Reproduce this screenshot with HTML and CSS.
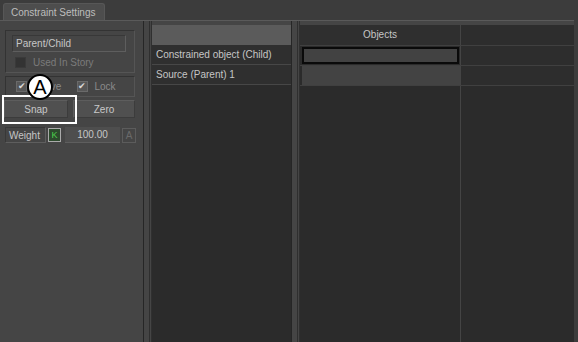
FILE: index.html
```html
<!DOCTYPE html>
<html lang="en">
<head>
    <meta charset="UTF-8">
    <title>Constraint Settings</title>
    <link rel="stylesheet" href="styles.css">
</head>
<body>
    <div class="tabbar">
        <div class="tab">Constraint Settings</div>
    </div>

    <div class="main">
        <!-- left settings column -->
        <div class="left">
            <div class="group group-type">
                <div class="field">Parent/Child</div>
                <div class="check-row disabled">
                    <span class="box"></span>
                    <span>Used In Story</span>
                </div>
            </div>

            <div class="group group-flags">
                <div class="check-row">
                    <span class="box checked">&#10004;</span>
                    <span>Active</span>
                </div>
                <div class="check-row lock">
                    <span class="box checked">&#10004;</span>
                    <span>Lock</span>
                </div>
            </div>

            <div class="buttons">
                <button class="btn btn-snap">Snap</button>
                <button class="btn btn-zero">Zero</button>
                <span class="highlight"></span>
            </div>

            <div class="weight-row">
                <span class="weight-label">Weight</span>
                <span class="key">K</span>
                <span class="weight-value">100.00</span>
                <span class="anim">A</span>
            </div>

            <span class="callout">A</span>
        </div>

        <div class="splitter"></div>

        <!-- constraint slots -->
        <div class="slots">
            <div class="slot-head"></div>
            <div class="slot-row">Constrained object (Child)</div>
            <div class="slot-row">Source (Parent) 1</div>
        </div>

        <div class="splitter"></div>

        <!-- objects grid -->
        <div class="objects">
            <div class="obj-row obj-head">
                <div class="cell">Objects</div>
                <div class="cell cell-side"></div>
            </div>
            <div class="obj-row">
                <div class="cell"><div class="slot-box"></div></div>
                <div class="cell cell-side"></div>
            </div>
            <div class="obj-row">
                <div class="cell cell-light"></div>
                <div class="cell cell-side"></div>
            </div>
            <div class="obj-fill">
                <div class="cell"></div>
                <div class="cell cell-side"></div>
            </div>
        </div>
    </div>
</body>
</html>
```

FILE: styles.css
```css
/* Constraint Settings panel */
body {
    margin: 0;
    width: 578px;
    height: 342px;
    overflow: hidden;
    background-color: #3c3c3c;
    font-family: 'Liberation Sans', Arial, sans-serif;
    font-size: 10px;
    color: #c6c6c6;
}

.tabbar {
    height: 20px;
    padding: 3px 0 0 3px;
    box-sizing: border-box;
}

.tab {
    width: 102px;
    height: 17px;
    line-height: 17px;
    padding-left: 7px;
    box-sizing: border-box;
    background-color: #4d4d4d;
    border: 1px solid #575757;
    border-bottom: none;
    border-radius: 3px 3px 0 0;
    color: #bdbdbd;
}

.main {
    display: flex;
    height: 322px;
    width: 574px;
    border-top: 1px solid #5a5a5a;
    background-color: #454545;
}

.main > div {
    flex-shrink: 0;
}

/* left column */
.left {
    position: relative;
    width: 143px;
    padding: 9px 0 0 5px;
    box-sizing: border-box;
    display: flex;
    flex-direction: column;
}

.group {
    width: 130px;
    box-sizing: border-box;
    border: 1px solid #333;
    border-right-color: #555;
    border-bottom-color: #555;
}

.group-type {
    height: 43px;
    padding: 4px 0 0 6px;
}

.field {
    width: 114px;
    height: 17px;
    line-height: 16px;
    box-sizing: border-box;
    padding-left: 3px;
    border: 1px solid #5e5e5e;
    border-top-color: #383838;
    border-left-color: #383838;
    background-color: #464646;
}

.check-row {
    display: flex;
    align-items: center;
    gap: 7px;
    height: 12px;
    margin-top: 4px;
    padding-left: 3px;
}

.check-row.disabled {
    color: #7b7b7b;
}

.box {
    width: 11px;
    height: 11px;
    background-color: #333;
    border: 1px solid #3a3a3a;
    box-sizing: border-box;
    display: flex;
    align-items: center;
    justify-content: center;
    font-size: 9px;
    color: #d8d8d8;
}

.box.checked {
    background-color: #575757;
    border-color: #6a6a6a;
}

.group-flags {
    margin-top: 3px;
    height: 21px;
    display: flex;
    padding: 2px 0 0 7px;
    color: #8a8a8a;
}

.group-flags .check-row {
    margin-top: 0;
    padding-left: 3px;
    height: 14px;
    width: 60px;
}

.buttons {
    position: relative;
    display: flex;
    gap: 5px;
    margin: 3px 0 0 -1px;
}

.btn {
    height: 18px;
    padding: 0;
    font-family: inherit;
    font-size: 10px;
    color: #c8c8c8;
    background-color: #505050;
    border: 1px solid #5d5d5d;
    border-bottom-color: #3c3c3c;
    border-right-color: #3c3c3c;
}

.btn-snap {
    width: 64px;
}

.btn-zero {
    width: 62px;
}

.highlight {
    position: absolute;
    left: -2px;
    top: -5px;
    width: 75px;
    height: 29px;
    box-sizing: border-box;
    border: 2px solid #fff;
}

.weight-row {
    display: flex;
    align-items: center;
    height: 16px;
    margin-top: 9px;
}

.weight-label {
    width: 41px;
    height: 16px;
    line-height: 15px;
    box-sizing: border-box;
    padding-left: 3px;
    border: 1px solid #5e5e5e;
    border-top-color: #383838;
    border-left-color: #383838;
}

.key {
    width: 11px;
    height: 12px;
    margin-left: 2px;
    line-height: 12px;
    text-align: center;
    font-size: 9px;
    color: #4cd14c;
    background-color: #2d4a2d;
    border: 1px solid #aaa;
}

.weight-value {
    width: 55px;
    height: 16px;
    margin-left: 4px;
    line-height: 16px;
    text-align: center;
    background-color: #4e4e4e;
    border-bottom: 1px solid #5e5e5e;
    box-sizing: border-box;
}

.anim {
    width: 14px;
    height: 15px;
    margin-left: 2px;
    line-height: 13px;
    text-align: center;
    box-sizing: border-box;
    color: #6a6a6a;
    border: 1px solid #5c5c5c;
}

.callout {
    position: absolute;
    left: 27px;
    top: 53px;
    width: 26px;
    height: 26px;
    box-sizing: border-box;
    border: 2px solid #000;
    border-radius: 50%;
    background-color: #fff;
    color: #000;
    font-size: 20px;
    line-height: 22px;
    text-align: center;
}

/* splitters between panes */
.splitter {
    width: 9px;
    border-left: 1px solid #262626;
    border-right: 1px solid #303030;
    box-sizing: border-box;
    background-color: #454545;
    position: relative;
}

.splitter::after {
    content: '';
    position: absolute;
    right: 1px;
    top: 0;
    bottom: 0;
    width: 1px;
    background-color: #2f2f2f;
}

/* slot list */
.slots {
    width: 139px;
    padding-top: 4px;
    background-color: #2b2b2b;
    box-shadow: inset 0 4px 0 #454545;
}

.slot-head {
    height: 20px;
    background-color: #5b5b5b;
}

.slot-row {
    height: 19px;
    line-height: 20px;
    padding-left: 4px;
    white-space: nowrap;
    background-color: #2f2f2f;
    border-bottom: 1px solid #474747;
}

/* objects grid */
.objects {
    width: 274px;
    display: flex;
    flex-direction: column;
    padding-top: 4px;
    background-color: #2b2b2b;
    box-shadow: inset 0 4px 0 #454545;
}

.obj-row {
    display: flex;
    height: 19px;
    border-bottom: 1px solid #404040;
}

.obj-head {
    height: 20px;
    line-height: 20px;
    text-align: center;
    background-color: #2f2f2f;
}

.obj-fill {
    flex: 1;
    display: flex;
}

.cell {
    width: 161px;
    border-right: 1px solid #444;
    box-sizing: border-box;
}

.cell-side {
    flex: 1;
    border-right: none;
}

.obj-row .cell-side {
    background-color: #2d2d2d;
}

.slot-box {
    height: 17px;
    margin: 1px 1px 0 2px;
    box-sizing: border-box;
    border: 2px solid #0a0a0a;
    background-color: #424242;
}

.cell-light {
    margin-left: 2px;
    width: 159px;
    background-color: #434343;
}
```
